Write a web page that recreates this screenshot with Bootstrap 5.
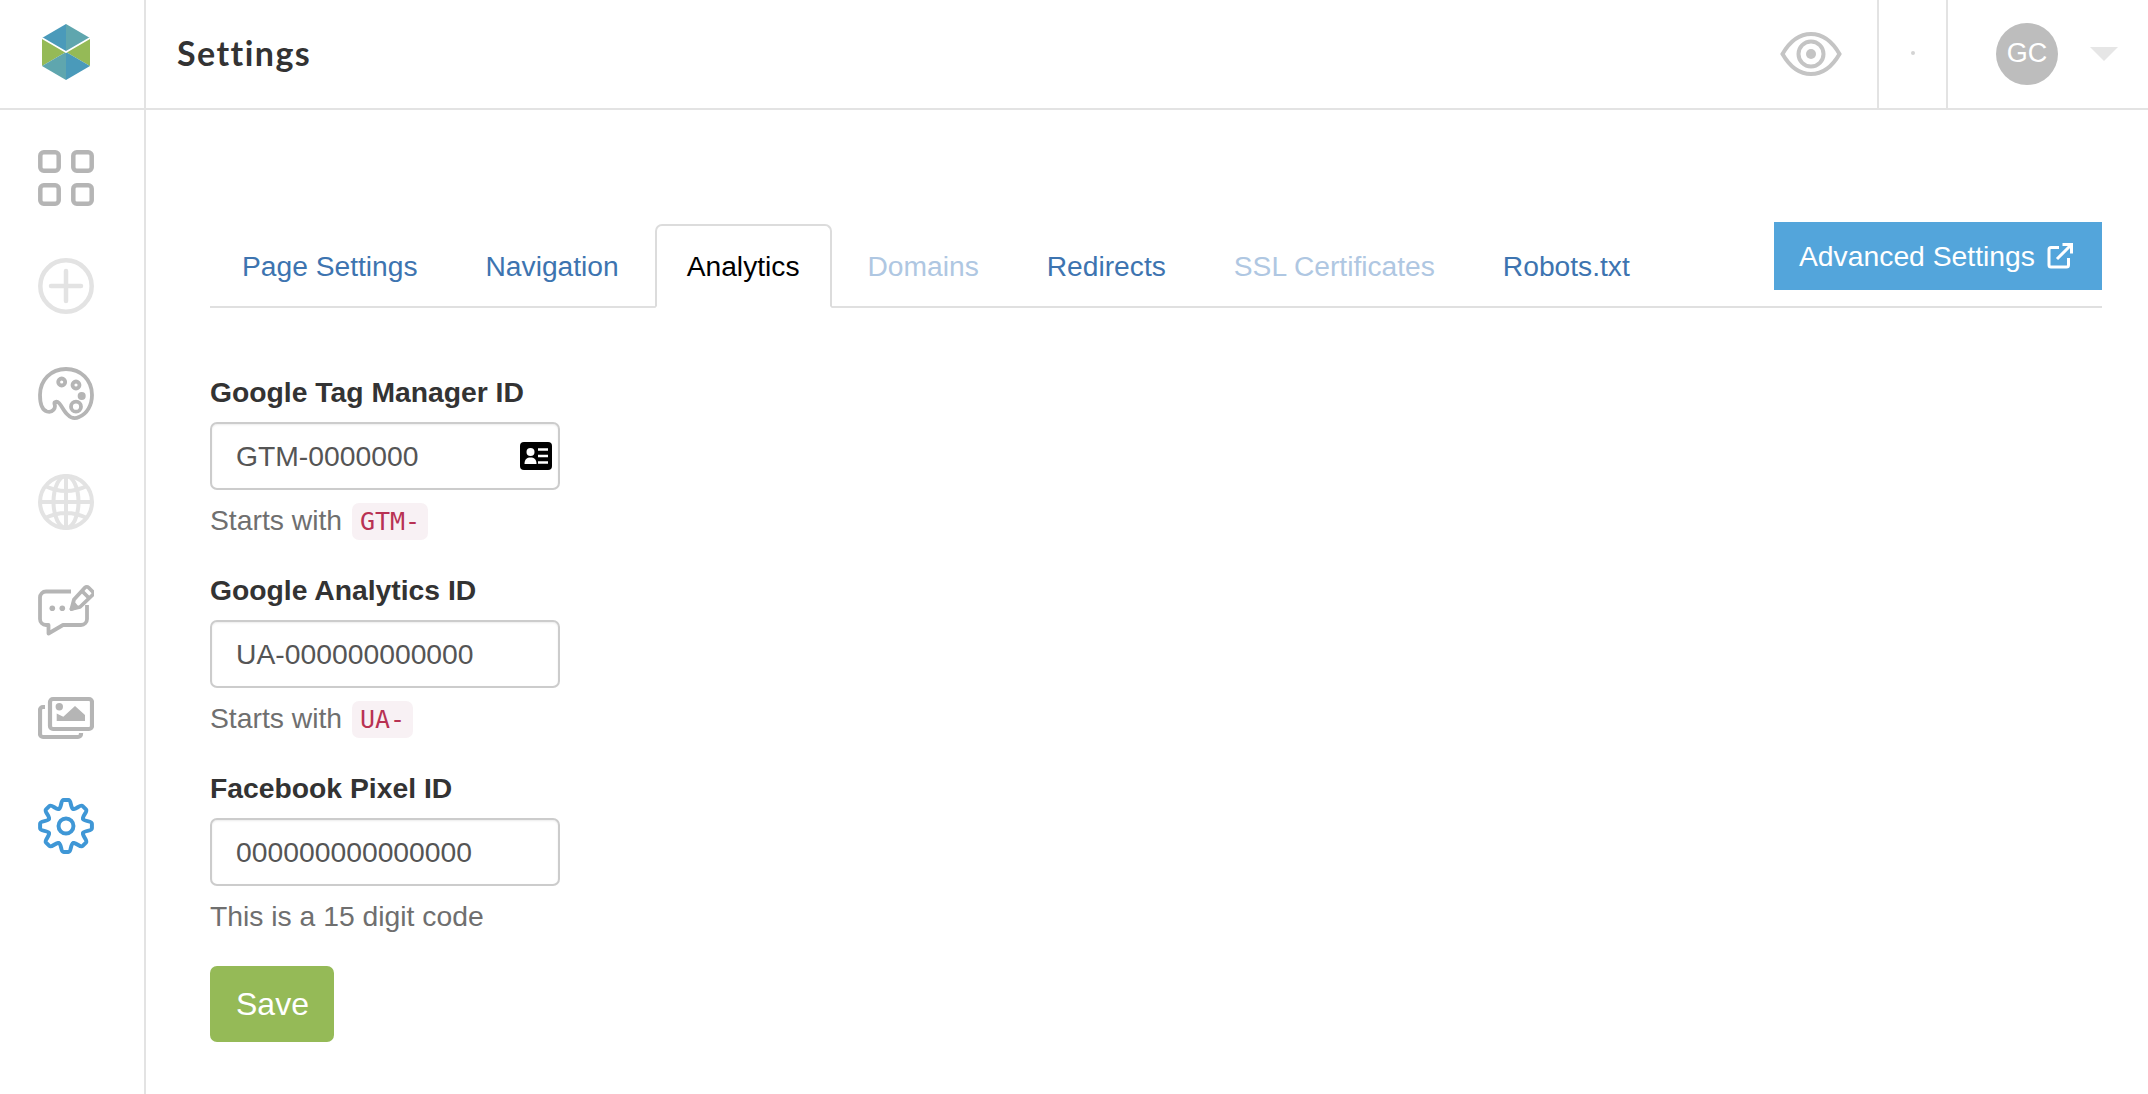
<!DOCTYPE html>
<html lang="en">
<head>
<meta charset="utf-8">
<title>Settings</title>
<link href="https://cdn.jsdelivr.net/npm/bootstrap@5.3.0/dist/css/bootstrap.min.css" rel="stylesheet">
<style>
html,body{height:100%}
body{font-family:"Liberation Sans",Arial,sans-serif;font-size:28.300px;color:#333;background:#fff;overflow:hidden}
.app-top{height:110px;border-bottom:2px solid #e3e3e3}
.app-logo{width:146px;border-right:2px solid #e3e3e3;padding:0 12px 4px 0}
.app-title{font-family:"Lato",sans-serif;font-weight:700;font-size:34px;letter-spacing:1.450px;color:#333;padding:0 0 2px 31px;margin:0}
.top-eye{width:132px}
.top-dot{width:71px;border-left:2px solid #e3e3e3;border-right:2px solid #e3e3e3}
.top-dot span{width:4px;height:4px;background:#d4d4d4;margin-bottom:2px}
.top-user{width:200px;padding:0 0 1px 48px;gap:32px}
.user-avatar{width:62px;height:62px;background:#bdbdbd;color:#fff;font-size:27px}
.user-caret{width:0;height:0;border-left:14px solid transparent;border-right:14px solid transparent;border-top:14px solid #e6e6e6}
.app-side{width:146px;border-right:2px solid #e3e3e3;padding:14px 12px 0 0}
.side-item{height:108px}
.app-main{padding:112px 46px 0 64px}
.tab-row{border-bottom:2px solid #e0e0e0}
.tab-row .nav-tabs{border:0;gap:4px;--bs-nav-tabs-border-width:2px;--bs-nav-tabs-border-radius:7px;margin-bottom:-2px}
.tab-row .nav-link{font-size:28.200px;line-height:36px;padding:22px 30px 22px;color:#3d74b0;margin-bottom:0}
.tab-row .nav-link.disabled{color:#afc7e2}
.tab-row .nav-link.active{color:#000;border-color:#dcdcdc #dcdcdc #fff}
.adv-btn{background:#53a5db;color:#fff;border:0;border-radius:0;font-size:28.300px;line-height:36px;padding:16px 25px;margin-bottom:16px;gap:12px;width:328px;height:68px;white-space:nowrap}
.adv-btn:hover{background:#53a5db;color:#fff}
.form-area{padding-top:66px;width:350px}
.field{margin-bottom:34px}
.field .form-label{display:block;font-weight:700;font-size:28.300px;line-height:36px;margin-bottom:12px;color:#333;white-space:nowrap}
.field .form-control{font-size:28.300px;line-height:36px;height:68px;padding:14px 24px;color:#555;border:2px solid #ccc;border-radius:7px;box-shadow:inset 0 1px 2px rgba(0,0,0,.08)}
.field .form-text{font-size:28.300px;line-height:36px;height:36px;margin-top:12px;color:#6f6f6f;white-space:nowrap}
.field code{font-family:"DejaVu Sans Mono",monospace;font-size:25px;line-height:1;color:#b83253;background:#f8f1f4;border-radius:7px;padding:4px 8px;margin-left:2px}
.input-icon{position:absolute;right:8px;top:20px}
.save-btn{background:#95ba57;border:0;color:#fff;font-size:32px;line-height:40px;padding:18px 26px;border-radius:7px;height:76px;width:124px;margin-top:-2px}
.save-btn:hover{background:#95ba57;color:#fff}
</style>
</head>
<body>
<header class="app-top d-flex align-items-stretch">
  <div class="app-logo d-flex align-items-center justify-content-center">
    <svg width="48" height="58" viewBox="0 0 48 58" aria-label="logo">
      <polygon points="24,1 0,15 24,29" fill="#4a9aba"/>
      <polygon points="24,1 48,15 24,29" fill="#5fa6ae"/>
      <polygon points="0,15 24,29 0,43" fill="#95ba57"/>
      <polygon points="48,15 24,29 48,43" fill="#95ba57"/>
      <polygon points="0,43 24,29 24,57" fill="#5fa6ae"/>
      <polygon points="48,43 24,29 24,57" fill="#4a9aba"/>
      <polyline points="0,15 24,29 48,15" fill="none" stroke="#fff" stroke-width="1.600"/>
    </svg>
  </div>
  <div class="flex-grow-1 d-flex align-items-center"><h1 class="app-title">Settings</h1></div>
  <div class="top-eye d-flex align-items-center justify-content-center">
    <svg width="62" height="44" viewBox="0 0 62 44" fill="none" stroke="#c4c4c4" stroke-width="4">
      <path d="M2.500 22C10 9 20 2 31 2S52 9 59.500 22C52 35 42 42 31 42S10 35 2.500 22Z"/>
      <circle cx="31" cy="22" r="12.500"/>
      <circle cx="31" cy="22" r="5" fill="#c4c4c4" stroke="none"/>
    </svg>
  </div>
  <div class="top-dot d-flex align-items-center justify-content-center"><span class="rounded-circle"></span></div>
  <div class="top-user d-flex align-items-center">
    <div class="user-avatar rounded-circle d-flex align-items-center justify-content-center">GC</div>
    <div class="user-caret"></div>
  </div>
</header>
<div class="d-flex" style="height:984px">
  <aside class="app-side flex-shrink-0">
    <div class="side-item d-flex align-items-center justify-content-center">
      <svg width="56" height="56" viewBox="0 0 56 56" fill="none" stroke="#b5b5b5" stroke-width="4.500">
        <rect x="2.300" y="2.300" width="18.400" height="18.400" rx="3.500"/><rect x="35.300" y="2.300" width="18.400" height="18.400" rx="3.500"/>
        <rect x="2.300" y="35.300" width="18.400" height="18.400" rx="3.500"/><rect x="35.300" y="35.300" width="18.400" height="18.400" rx="3.500"/>
      </svg>
    </div>
    <div class="side-item d-flex align-items-center justify-content-center">
      <svg width="56" height="56" viewBox="0 0 56 56" fill="none" stroke="#e3e3e3" stroke-width="4.500" stroke-linecap="round">
        <circle cx="28" cy="28" r="25.700"/><path d="M13 28H43M28 13V43"/>
      </svg>
    </div>
    <div class="side-item d-flex align-items-center justify-content-center">
      <svg width="56" height="56" viewBox="0 0 56 56" fill="none" stroke="#b5b5b5" stroke-width="3.800">
        <path d="M28 3C13 3 2 14 2 29C2 37 4 44 9 45.500C15 47 18 42 16.500 38C16 35.500 19 35 21 37C24 40 26 46 30 49C33 52 37 53 41 51C49 48 54 39 54 29C54 14 43 3 28 3Z"/>
        <circle cx="23.700" cy="16" r="3.500"/><circle cx="38" cy="19" r="3.500"/>
        <circle cx="43.700" cy="30" r="4" fill="#b5b5b5" stroke="none"/><circle cx="38" cy="40.700" r="5"/>
      </svg>
    </div>
    <div class="side-item d-flex align-items-center justify-content-center">
      <svg width="56" height="56" viewBox="0 0 56 56" fill="none" stroke="#e3e3e3" stroke-width="4">
        <circle cx="28" cy="28" r="26"/><ellipse cx="28" cy="28" rx="12.500" ry="26"/>
        <path d="M28 2V54M2 28H54M7 12Q28 22 49 12M7 44Q28 34 49 44"/>
      </svg>
    </div>
    <div class="side-item d-flex align-items-center justify-content-center">
      <svg width="56" height="56" viewBox="0 -2 56 56" fill="none" stroke="#b5b5b5" stroke-width="3.800" stroke-linejoin="round">
        <path d="M33 7.500H8a6 6 0 0 0-6 6V35a6 6 0 0 0 6 6h2.500v8.500L25 41H43a6 6 0 0 0 6-6V21"/>
        <circle cx="14.300" cy="24.300" r="2.800" fill="#b5b5b5" stroke="none"/><circle cx="24.300" cy="24.300" r="2.800" fill="#b5b5b5" stroke="none"/>
        <path d="M33.500 25L36 15.500L47 3.500a2.500 2.500 0 0 1 3.500 0l4 4a2.500 2.500 0 0 1 0 3.500L42 23Z"/>
        <path d="M44 7L50.500 13.500"/>
        <path d="M33.500 25L36 20L38.500 23Z" fill="#b5b5b5"/>
      </svg>
    </div>
    <div class="side-item d-flex align-items-center justify-content-center">
      <svg width="56" height="56" viewBox="0 0 56 56" fill="none" stroke="#b5b5b5" stroke-width="4.200">
        <rect x="12" y="9" width="42" height="30" rx="3"/>
        <path d="M7 17H5a3 3 0 0 0-3 3V44a3 3 0 0 0 3 3H40a3 3 0 0 0 3-3V43"/>
        <circle cx="21.300" cy="16.700" r="3.700" fill="#b5b5b5" stroke="none"/>
        <polygon points="18.700,31 18.700,23.500 25.300,26.700 37,16 47,25 47,31" fill="#b5b5b5" stroke="none"/>
      </svg>
    </div>
    <div class="side-item d-flex align-items-center justify-content-center">
      <svg width="56" height="56" viewBox="0 0 24 24" fill="none" stroke="#3f97d6" stroke-width="1.700" stroke-linecap="round" stroke-linejoin="round">
        <path d="M8.900 4.700C10.200 4.300 9.600 .900 11 .900H13C14.400 .900 13.800 4.300 15.100 4.700"/>
        <path transform="rotate(45 12 12)" d="M8.900 4.700C10.200 4.300 9.600 .900 11 .900H13C14.400 .900 13.800 4.300 15.100 4.700"/>
        <path transform="rotate(90 12 12)" d="M8.900 4.700C10.200 4.300 9.600 .900 11 .900H13C14.400 .900 13.800 4.300 15.100 4.700"/>
        <path transform="rotate(135 12 12)" d="M8.900 4.700C10.200 4.300 9.600 .900 11 .900H13C14.400 .900 13.800 4.300 15.100 4.700"/>
        <path transform="rotate(180 12 12)" d="M8.900 4.700C10.200 4.300 9.600 .900 11 .900H13C14.400 .900 13.800 4.300 15.100 4.700"/>
        <path transform="rotate(225 12 12)" d="M8.900 4.700C10.200 4.300 9.600 .900 11 .900H13C14.400 .900 13.800 4.300 15.100 4.700"/>
        <path transform="rotate(270 12 12)" d="M8.900 4.700C10.200 4.300 9.600 .900 11 .900H13C14.400 .900 13.800 4.300 15.100 4.700"/>
        <path transform="rotate(315 12 12)" d="M8.900 4.700C10.200 4.300 9.600 .900 11 .900H13C14.400 .900 13.800 4.300 15.100 4.700"/>
        <circle cx="12" cy="12" r="3.200"/>
      </svg>
    </div>
  </aside>
  <main class="app-main flex-grow-1">
    <div class="tab-row d-flex justify-content-between align-items-end">
      <ul class="nav nav-tabs">
        <li class="nav-item"><a class="nav-link" href="#">Page Settings</a></li>
        <li class="nav-item"><a class="nav-link" href="#">Navigation</a></li>
        <li class="nav-item"><a class="nav-link active" href="#">Analytics</a></li>
        <li class="nav-item"><a class="nav-link disabled" href="#">Domains</a></li>
        <li class="nav-item"><a class="nav-link" href="#">Redirects</a></li>
        <li class="nav-item"><a class="nav-link disabled" href="#">SSL Certificates</a></li>
        <li class="nav-item"><a class="nav-link" href="#">Robots.txt</a></li>
      </ul>
      <a class="btn adv-btn d-inline-flex align-items-center" href="#">Advanced Settings
        <svg width="26" height="26" viewBox="0 0 26 26" fill="none" stroke="#fff" stroke-width="3">
          <path d="M12 4.500H4a2 2 0 0 0-2 2V22a2 2 0 0 0 2 2H19.500a2 2 0 0 0 2-2V15"/><path d="M10 16L24 2M15.500 1.500H24.500V10.500"/>
        </svg>
      </a>
    </div>
    <form class="form-area">
      <div class="field">
        <label class="form-label" for="gtm">Google Tag Manager ID</label>
        <div class="position-relative">
          <input id="gtm" class="form-control" type="text" value="GTM-0000000">
          <svg class="input-icon" width="32" height="28" viewBox="0 0 32 28">
            <rect width="32" height="28" rx="4" fill="#000"/>
            <circle cx="10.500" cy="10" r="4" fill="#fff"/>
            <path d="M4.500 22c0-5 2.500-6.500 6-6.500s6 1.500 6 6.500Z" fill="#fff"/>
            <path d="M18 7.500H28M18 14H28M18 20.500H28" stroke="#fff" stroke-width="2.500"/>
          </svg>
        </div>
        <div class="form-text">Starts with <code>GTM-</code></div>
      </div>
      <div class="field">
        <label class="form-label" for="ua">Google Analytics ID</label>
        <input id="ua" class="form-control" type="text" value="UA-000000000000">
        <div class="form-text">Starts with <code>UA-</code></div>
      </div>
      <div class="field">
        <label class="form-label" for="fb">Facebook Pixel ID</label>
        <input id="fb" class="form-control" type="text" value="000000000000000">
        <div class="form-text">This is a 15 digit code</div>
      </div>
      <button class="btn save-btn" type="button">Save</button>
    </form>
  </main>
</div>
<script src="https://cdn.jsdelivr.net/npm/bootstrap@5.3.0/dist/js/bootstrap.bundle.min.js"></script>
</body>
</html>
